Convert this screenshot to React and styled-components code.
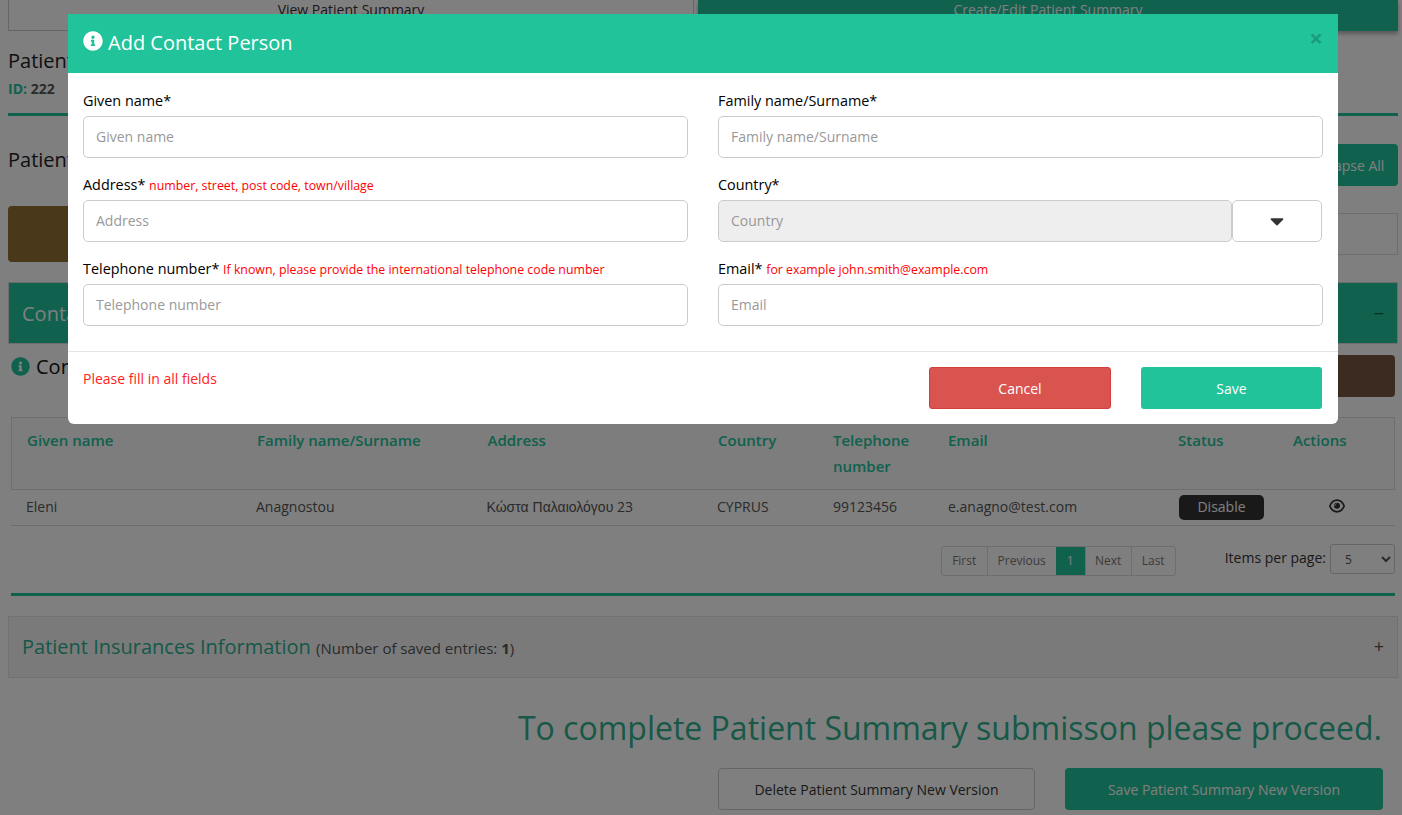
import React from "react";
import styled, { createGlobalStyle } from "styled-components";
import { FaInfoCircle, FaCaretDown } from "react-icons/fa";

const Global = createGlobalStyle`
  html, body { margin: 0; height: 815px; overflow: hidden; background: #fff; }
  body { font-family: "Open Sans", "Noto Sans", sans-serif; font-size: 14px; color: #333; }
  * { box-sizing: border-box; }
`;
const TEAL = "#21c39b";

const Page = styled.div`
  width: 1402px;
  height: 815px;
  overflow: hidden;
`;
const Tabs = styled.div`
  display: flex;
  gap: 4px;
  padding: 0 4px 0 8px;
  height: 31px;
  margin-bottom: 2px;
`;
const Tab = styled.div`
  flex: ${p => (p.$active ? "0 0 700px" : "0 0 686px")};
  display: flex;
  justify-content: center;
  padding-top: 0;
  line-height: 20px;
  border: 1px solid ${p => (p.$active ? TEAL : "#ccc")};
  border-top: 0;
  background: ${p => (p.$active ? TEAL : "#fff")};
  color: ${p => (p.$active ? "#fff" : "#333")};
  box-shadow: ${p => (p.$active ? "0 3px 4px rgba(0,0,0,.3)" : "none")};
`;
const TitleBlock = styled.div`
  padding: 14px 4px 0 8px;
  height: 80px;
`;
const Title = styled.div`
  font-size: 20px;
  line-height: 27px;
  color: #222;
`;
const PatientId = styled.div`
  margin-top: 6px;
  font-size: 14px;
  line-height: 18px;
  font-weight: 700;
  color: #555;
  span { color: ${TEAL}; }
`;
const Rule = styled.div`
  height: 3px;
  background: ${TEAL};
  margin: ${p => p.$margin};
`;
const HeaderRow = styled.div`
  display: flex;
  justify-content: space-between;
  align-items: flex-start;
  margin: 28px 4px 20px 8px;
  height: 42px;
  ${Title} { margin-top: 2px; }
`;
const TealButton = styled.div`
  display: flex;
  align-items: center;
  justify-content: center;
  width: ${p => p.$width};
  height: 42px;
  background: ${TEAL};
  color: #fff;
  border-radius: 4px;
`;
const ToolRow = styled.div`
  display: flex;
  justify-content: space-between;
  align-items: center;
  margin: 0 4px 20px 8px;
  height: 56px;
`;
const BrownBlock = styled.div`
  width: 640px;
  height: 56px;
  background: #927033;
  border-radius: 4px;
`;
const GhostBox = styled.div`
  width: 600px;
  height: 42px;
  border: 1px solid #ddd;
`;
const Panel = styled.div`
  display: flex;
  justify-content: space-between;
  align-items: center;
  height: 62px;
  margin: ${p => (p.$open ? "0 4px 0 8px" : "20px 4px 0 8px")};
  padding: ${p => (p.$open ? "0 13px" : "0 13px 2px")};
  border: 1px solid ${p => (p.$open ? "#ddd" : "#e3e3e3")};
  background: ${p => (p.$open ? TEAL : "#f5f5f5")};
`;
const PanelTitle = styled.div`
  font-size: 20px;
  color: ${p => (p.$open ? "#fff" : "#2ab08e")};
  small { font-size: 15px; color: #555; b { font-weight: 700; } }
`;
const Toggle = styled.span`
  font-size: 18px;
  color: ${p => (p.$open ? "#0a5a46" : "#555")};
`;
const InfoRow = styled.div`
  display: flex;
  justify-content: space-between;
  align-items: flex-start;
  margin: 11px 7px 20px 11px;
  height: 42px;
`;
const InfoTitle = styled.div`
  display: flex;
  align-items: flex-start;
  gap: 6px;
  font-size: 20px;
  line-height: 24px;
  color: #111;
  svg { color: ${TEAL}; width: 19px; height: 19px; margin-top: 2px; }
`;
const AddButton = styled.div`
  width: 400px;
  height: 42px;
  background: #765640;
  border-radius: 4px;
`;
const TableWrap = styled.div`
  margin: 0 7px 0 11px;
`;
const HeadRow = styled.div`
  display: grid;
  grid-template-columns: 230px 230.5px 230.5px 115px 115px 230px 115px 1fr;
  border: 1px solid #ddd;
  height: 73px;
  padding: 9px 0 0 0;
  background: #fafafa;
`;
const HeadCell = styled.div`
  padding: 0 10px 0 15px;
  font-size: 15px;
  font-weight: 600;
  line-height: 26px;
  color: ${TEAL};
`;
const BodyRow = styled.div`
  display: grid;
  grid-template-columns: 230px 230.5px 230.5px 116px 115px 230px 115px 1fr;
  height: 36px;
  align-items: center;
  border-bottom: 1px solid #ddd;
`;
const BodyCell = styled.div`
  padding: 0 0 3px 15px;
  color: #555;
`;
const GreekText = styled.span`
  font-family: "Liberation Sans", Arial, sans-serif;
`;
const Disable = styled.div`
  margin: -1px 0 0 16px;
  width: 85px;
  height: 25px;
  line-height: 24px;
  text-align: center;
  border-radius: 5px;
  background: #333;
  color: #fff;
`;
const EyeCell = styled.div`
  padding-left: 51px;
  color: #333;
  display: flex;
  svg { width: 16px; height: 14px; margin-top: -3px; }
`;
const PagerRow = styled.div`
  display: flex;
  justify-content: flex-end;
  align-items: flex-start;
  margin: 18px 0 17px;
  height: 32px;
`;
const Pager = styled.div`
  display: flex;
  height: 30px;
  margin-top: 2px;
  margin-right: 49px;
  border: 1px solid #ddd;
  border-radius: 3px;
`;
const PageItem = styled.div`
  display: flex;
  align-items: center;
  justify-content: center;
  width: ${p => p.$width}px;
  padding-bottom: 1px;
  font-size: 12px;
  color: ${p => (p.$active ? "#fff" : "#777")};
  background: ${p => (p.$active ? TEAL : "transparent")};
  border-left: ${p => (p.$first || p.$active ? "0" : "1px solid #ddd")};
`;
const PerPage = styled.div`
  display: flex;
  align-items: center;
  height: 30px;
  gap: 4px;
  color: #333;
`;
const PerPageLabel = styled.span`
  margin-top: -3px;
`;
const Select = styled.select`
  width: 65px;
  height: 30px;
  padding-left: 10px;
  font: 12px "Open Sans", sans-serif;
  color: #555;
  background: #fff;
  border: 1px solid #ccc;
  border-radius: 3px;
`;
const Proceed = styled.div`
  margin: 28px 20px 18px 0;
  text-align: right;
  font-size: 32px;
  line-height: 44px;
  color: #2fb08f;
`;
const ActionRow = styled.div`
  display: flex;
  justify-content: flex-end;
  gap: 30px;
  margin-right: 19px;
`;
const OutlineAction = styled.div`
  width: 317px;
  height: 42px;
  line-height: 42px;
  text-align: center;
  border: 1px solid #ccc;
  border-radius: 4px;
  color: #333;
`;
const SolidAction = styled.div`
  width: 318px;
  height: 42px;
  line-height: 44px;
  text-align: center;
  background: ${TEAL};
  border-radius: 4px;
  color: #fff;
`;

const Backdrop = styled.div`
  position: fixed;
  inset: 0;
  background: rgba(0, 0, 0, 0.5);
`;
const Modal = styled.div`
  width: 1270px;
  margin: 14px 0 0 68px;
  background: #fff;
  border-radius: 0 0 6px 6px;
  overflow: hidden;
`;
const ModalHeader = styled.div`
  display: flex;
  justify-content: space-between;
  height: 59px;
  padding: 0 15px;
  background: ${TEAL};
  color: #fff;
`;
const ModalTitle = styled.div`
  display: flex;
  gap: 5px;
  font-size: 20px;
  line-height: 58px;
  svg { width: 20px; height: 20px; margin-top: 17px; }
`;
const Close = styled.span`
  font-size: 24px;
  font-weight: 700;
  line-height: 48px;
  color: #000;
  opacity: 0.2;
`;
const FormGrid = styled.div`
  display: grid;
  grid-template-columns: 605px 605px;
  column-gap: 30px;
  row-gap: 14px;
  padding: 15px 15px 25px;
  border-bottom: 1px solid #e5e5e5;
`;
const Field = styled.div``;
const Label = styled.div`
  height: 26px;
  line-height: 26px;
  margin-bottom: 2px;
  font-size: 14.4px;
  color: #000;
  font-weight: 500;
  white-space: nowrap;
`;
const Hint = styled.span`
  font-size: 12.35px;
  font-weight: 400;
  color: #f00;
`;
const Input = styled.input`
  display: block;
  width: 100%;
  height: 42px;
  padding: 0 12px 2px;
  font: 14px "Open Sans", sans-serif;
  border: 1px solid #ccc;
  border-radius: 5px;
  background: ${p => (p.disabled ? "#eee" : "#fff")};
  outline: none;
  &::placeholder { color: #999; opacity: 1; }
`;
const InputGroup = styled.div`
  display: flex;
  width: 604px;
  ${Input} { flex: 1; min-width: 0; }
`;
const CaretButton = styled.div`
  flex: 0 0 90px;
  display: flex;
  align-items: center;
  justify-content: center;
  height: 42px;
  border: 1px solid #ccc;
  border-radius: 5px;
  color: #333;
  svg { width: 22px; height: 22px; margin-top: -1px; }
`;
const ModalFooter = styled.div`
  display: flex;
  justify-content: space-between;
  padding: 15px 16px 15px 15px;
`;
const ErrorText = styled.div`
  margin-top: 2px;
  line-height: 20px;
  color: #f22;
`;
const FooterButtons = styled.div`
  display: flex;
  gap: 30px;
`;
const FooterButton = styled.div`
  width: ${p => p.$width}px;
  height: 42px;
  text-align: center;
  color: #fff;
  border-radius: 3px;
  background: ${p => (p.$danger ? "#d9534f" : TEAL)};
  border: ${p => (p.$danger ? "1px solid #d43f3a" : "0")};
  line-height: ${p => (p.$danger ? "42px" : "44px")};
`;

const fields = [
  { label: "Given name*", ph: "Given name" },
  { label: "Family name/Surname*", ph: "Family name/Surname" },
  { label: "Address*", hint: "number, street, post code, town/village", ph: "Address" },
  { label: "Country*", ph: "Country", select: true },
  { label: "Telephone number*", hint: "If known, please provide the international telephone code number", ph: "Telephone number" },
  { label: "Email*", hint: "for example john.smith@example.com", ph: "Email" },
];
const heads = ["Given name", "Family name/Surname", "Address", "Country", "Telephone number", "Email", "Status", "Actions"];
const pages = [["First", 45], ["Previous", 69], ["1", 29], ["Next", 46], ["Last", 44]];

const EyeIcon = () => (
  <svg viewBox="0 0 16 14" aria-hidden="true">
    <path d="M0.8 7C2.4 3.4 5 1.2 8 1.2S13.6 3.4 15.2 7C13.6 10.8 11 12.8 8 12.8S2.4 10.8 0.8 7Z" fill="none" stroke="currentColor" strokeWidth="1.7" />
    <circle cx="8" cy="6.8" r="3" fill="currentColor" />
    <path d="M7.6 4.8A2 2 0 0 0 6 6.8" fill="none" stroke="#fff" strokeWidth="0.7" />
  </svg>
);

export default function App() {
  return (
    <Page>
      <Global />
      <Tabs>
        <Tab>View Patient Summary</Tab>
        <Tab $active>Create/Edit Patient Summary</Tab>
      </Tabs>
      <TitleBlock>
        <Title>Patient Summary</Title>
        <PatientId><span>ID:</span> 222</PatientId>
      </TitleBlock>
      <Rule $margin="0 4px 0 8px" />
      <HeaderRow>
        <Title>Patient Summary Sections</Title>
        <TealButton $width="102px">Collapse All</TealButton>
      </HeaderRow>
      <ToolRow>
        <BrownBlock />
        <GhostBox />
      </ToolRow>
      <Panel $open>
        <PanelTitle $open>Contact Persons</PanelTitle>
        <Toggle $open>−</Toggle>
      </Panel>
      <InfoRow>
        <InfoTitle><FaInfoCircle />Contact Persons</InfoTitle>
        <AddButton />
      </InfoRow>
      <TableWrap>
        <HeadRow>
          {heads.map(h => <HeadCell key={h}>{h}</HeadCell>)}
        </HeadRow>
        <BodyRow>
          <BodyCell>Eleni</BodyCell>
          <BodyCell>Anagnostou</BodyCell>
          <BodyCell><GreekText>Κώστα Παλαιολόγου</GreekText> 23</BodyCell>
          <BodyCell>CYPRUS</BodyCell>
          <BodyCell>99123456</BodyCell>
          <BodyCell>e.anagno@test.com</BodyCell>
          <div><Disable>Disable</Disable></div>
          <EyeCell><EyeIcon /></EyeCell>
        </BodyRow>
        <PagerRow>
          <Pager>
            {pages.map(([t, w], i) => (
              <PageItem key={t} $width={w} $first={i === 0} $active={t === "1"}>{t}</PageItem>
            ))}
          </Pager>
          <PerPage>
            <PerPageLabel>Items per page:</PerPageLabel>
            <Select defaultValue="5"><option>5</option></Select>
          </PerPage>
        </PagerRow>
        <Rule $margin="0" />
      </TableWrap>
      <Panel>
        <PanelTitle>Patient Insurances Information <small>(Number of saved entries: <b>1</b>)</small></PanelTitle>
        <Toggle>+</Toggle>
      </Panel>
      <Proceed>To complete Patient Summary submisson please proceed.</Proceed>
      <ActionRow>
        <OutlineAction>Delete Patient Summary New Version</OutlineAction>
        <SolidAction>Save Patient Summary New Version</SolidAction>
      </ActionRow>

      <Backdrop>
        <Modal>
          <ModalHeader>
            <ModalTitle><FaInfoCircle />Add Contact Person</ModalTitle>
            <Close>×</Close>
          </ModalHeader>
          <FormGrid>
            {fields.map(f => (
              <Field key={f.label}>
                <Label>{f.label} {f.hint && <Hint>{f.hint}</Hint>}</Label>
                {f.select ? (
                  <InputGroup>
                    <Input placeholder={f.ph} disabled />
                    <CaretButton><FaCaretDown /></CaretButton>
                  </InputGroup>
                ) : (
                  <Input placeholder={f.ph} />
                )}
              </Field>
            ))}
          </FormGrid>
          <ModalFooter>
            <ErrorText>Please fill in all fields</ErrorText>
            <FooterButtons>
              <FooterButton $danger $width={182}>Cancel</FooterButton>
              <FooterButton $width={181}>Save</FooterButton>
            </FooterButtons>
          </ModalFooter>
        </Modal>
      </Backdrop>
    </Page>
  );
}
